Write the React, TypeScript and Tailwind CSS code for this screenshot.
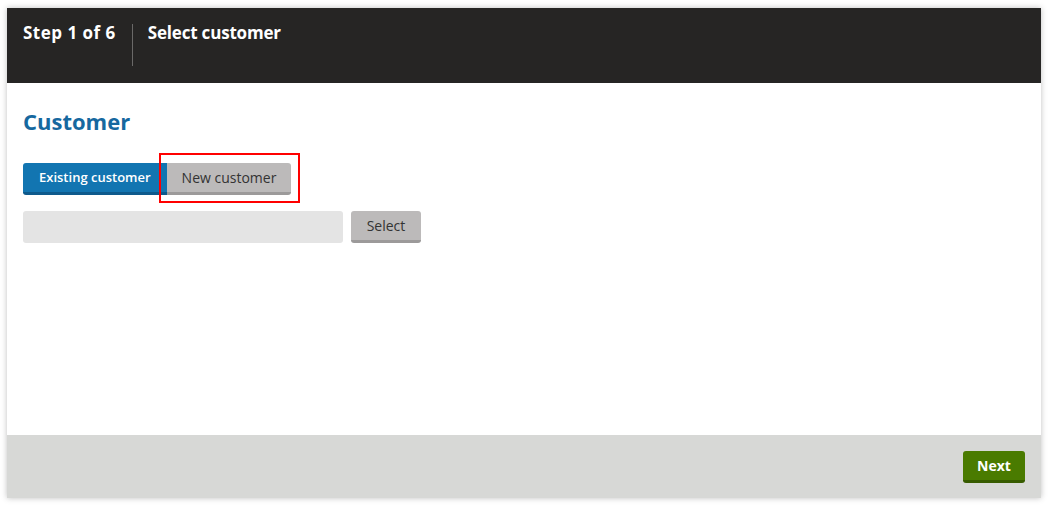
export default function App() {
  return (
    <div className="min-h-[508px] w-full bg-white pl-[7px] pr-[8px] pt-[8px] font-['Open_Sans',sans-serif]">
      <div className="flex h-[490px] flex-col bg-white shadow-[0_0_6px_rgba(0,0,0,0.25)]">
        <header className="flex h-[75px] items-start bg-[#262524] pt-[16px] text-white">
          <div className="pl-[16px] pr-[16px] text-[17px] font-bold leading-[18px] tracking-[0.5px]">Step 1 of 6</div>
          <div className="h-[42px] w-px bg-[#6a6968]" />
          <div className="pl-[15px] text-[17px] font-bold leading-[18px] tracking-[-0.2px]">Select customer</div>
        </header>

        <main className="flex-1 px-[16px] pt-[24px]">
          <h1 className="text-[22px] font-bold leading-[28px] text-[#16689f]">Customer</h1>

          <div className="mt-[28px] flex">
            <button className="h-[32px] rounded-l-[3px] border-b-[3px] border-[#0e5a8c] bg-[#1275b1] px-[16px] text-[13px] font-semibold text-white">
              Existing customer
            </button>
            <div className="relative">
              <button className="h-[32px] rounded-r-[3px] border-b-[3px] border-[#9c9a9a] bg-[#bcbaba] px-[15px] text-[14px] text-[#333]">
                New customer
              </button>
              <div className="pointer-events-none absolute -left-[8px] -top-[10px] h-[50px] w-[141px] border-[2px] border-[#ff0000]" />
            </div>
          </div>

          <div className="mt-[16px] flex gap-[8px]">
            <input className="h-[32px] w-[320px] rounded-[3px] bg-[#e4e4e4] px-[8px] text-[14px] outline-none" />
            <button className="h-[32px] w-[70px] rounded-[3px] border-b-[3px] border-[#9c9a9a] bg-[#bcbaba] text-[14px] text-[#333]">
              Select
            </button>
          </div>
        </main>

        <footer className="flex h-[63px] items-start justify-end bg-[#d7d8d6] pr-[16px] pt-[16px]">
          <button className="h-[32px] w-[62px] rounded-[3px] border-b-[3px] border-[#375c00] bg-[#4a7b00] text-[14px] font-bold text-white">
            Next
          </button>
        </footer>
      </div>
    </div>
  );
}
